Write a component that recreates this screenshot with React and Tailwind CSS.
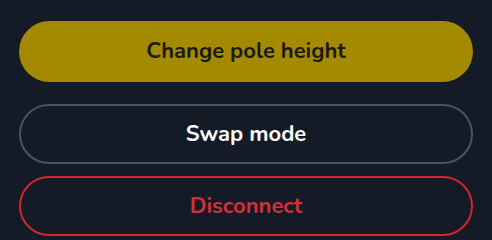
export default function App() {
  return (
    <div
      className="w-[492px] h-[240px] bg-[#141a26] overflow-hidden px-[19px] pt-[21px] flex flex-col"
      style={{ fontFamily: '"Nunito", "Lato", "Noto Sans", sans-serif' }}
    >
      <button className="h-[61px] w-full rounded-full bg-[#a38a00] text-[#1d1a0c] text-[22px] font-bold flex items-center justify-center">
        Change pole height
      </button>
      <button className="mt-[22px] h-[60px] w-full rounded-full border-2 border-[#4b5260] text-white text-[22px] font-bold flex items-center justify-center">
        Swap mode
      </button>
      <button className="mt-[12px] h-[60px] w-full rounded-full border-2 border-[#d4262b] text-[#d5303a] text-[22px] font-bold flex items-center justify-center">
        Disconnect
      </button>
    </div>
  );
}
